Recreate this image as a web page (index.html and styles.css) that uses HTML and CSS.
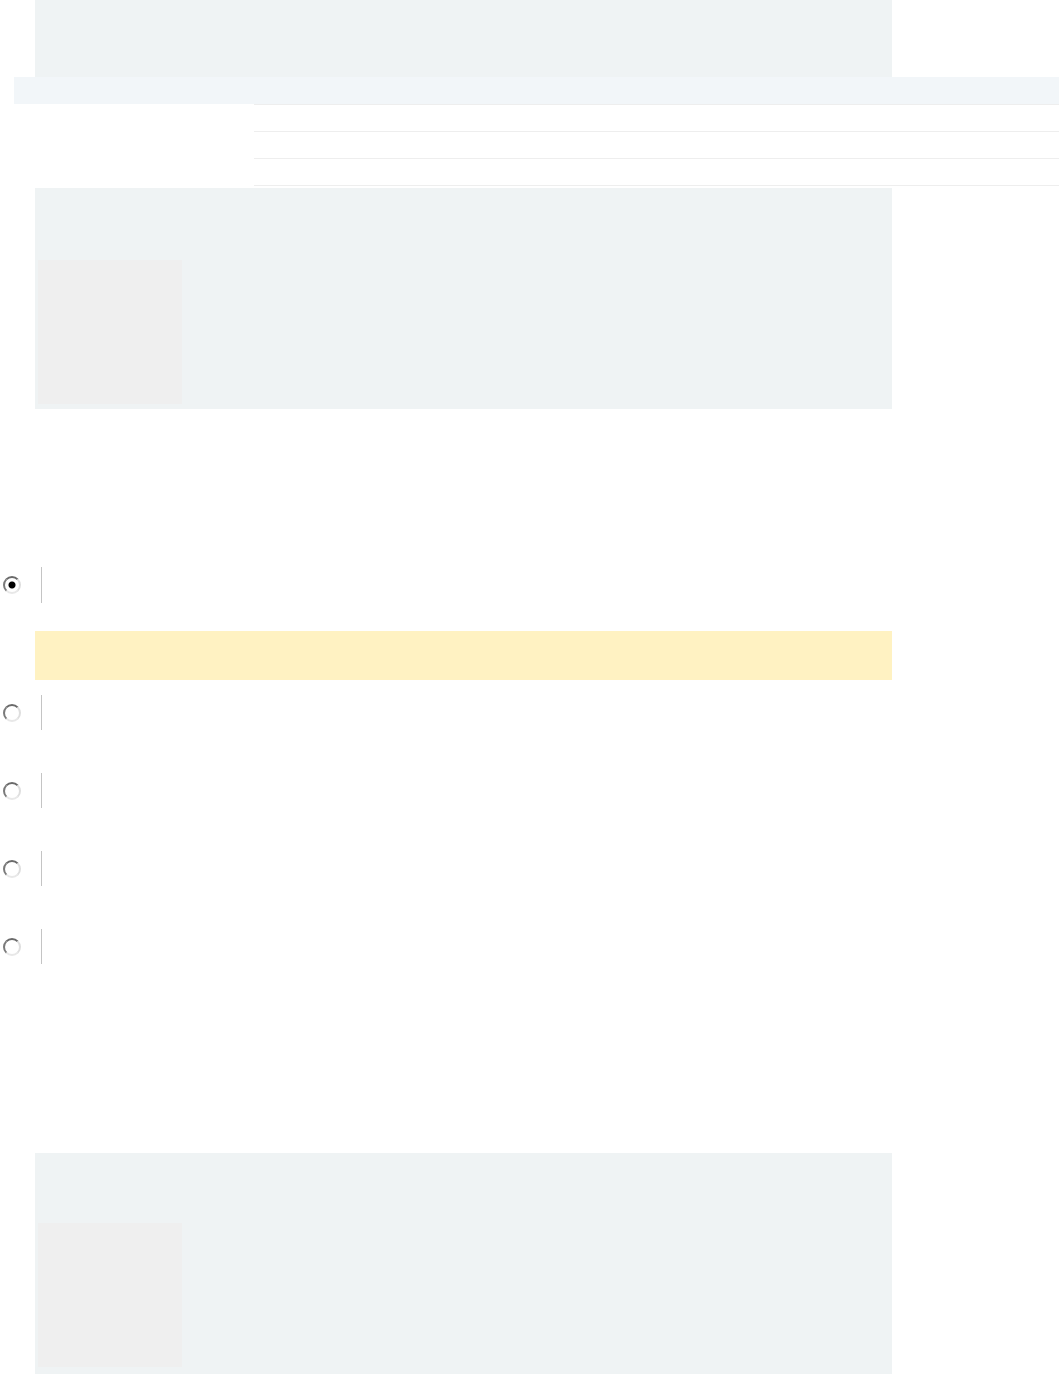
FILE: index.html
```html
<!DOCTYPE html>
<html lang="en">
<head>
<meta charset="utf-8">
<title>Page</title>
<link rel="stylesheet" href="styles.css">
</head>
<body>
<div class="page">
  <div class="hero"></div>
  <div class="band"></div>
  <div class="rows">
    <div class="row"></div>
    <div class="row"></div>
    <div class="row"></div>
  </div>
  <div class="card card-top">
    <div class="thumb"></div>
  </div>

  <form class="options">
    <label class="option">
      <input class="radio" type="radio" name="choice" checked>
      <span class="divider"></span>
    </label>
    <div class="notice"></div>
    <label class="option">
      <input class="radio" type="radio" name="choice">
      <span class="divider"></span>
    </label>
    <label class="option">
      <input class="radio" type="radio" name="choice">
      <span class="divider"></span>
    </label>
    <label class="option">
      <input class="radio" type="radio" name="choice">
      <span class="divider"></span>
    </label>
    <label class="option">
      <input class="radio" type="radio" name="choice">
      <span class="divider"></span>
    </label>
  </form>

  <div class="card card-bottom">
    <div class="thumb"></div>
  </div>
</div>
</body>
</html>
```

FILE: styles.css
```css
html, body {
  margin: 0;
  padding: 0;
  background: #ffffff;
  font-family: "Liberation Sans", Arial, sans-serif;
}

.page {
  display: flex;
  flex-direction: column;
  width: 1059px;
}

.hero {
  margin-left: 35px;
  width: 857px;
  height: 77px;
  background: #eff3f4;
}

.band {
  margin-left: 14px;
  height: 27px;
  background: #f2f6f9;
}

.rows {
  margin-left: 254px;
  border-top: 1px solid #eeeeee;
}

.row {
  height: 26px;
  border-bottom: 1px solid #eeeeee;
}

.card {
  margin-left: 35px;
  width: 857px;
  box-sizing: border-box;
  background: #eff3f4;
  padding-left: 3px;
}

.card-top {
  margin-top: 2px;
  height: 221px;
  padding-top: 72px;
}

.card-bottom {
  margin-top: 189px;
  height: 221px;
  padding-top: 70px;
}

.thumb {
  width: 144px;
  height: 144px;
  background: #efefef;
}

.options {
  display: flex;
  flex-direction: column;
  margin: 158px 0 0 0;
}

.option {
  display: flex;
  align-items: center;
  height: 35px;
  margin-bottom: 43px;
}

.option:first-child {
  height: 36px;
  margin-bottom: 28px;
}

.option:last-child {
  margin-bottom: 0;
}

.radio {
  -webkit-appearance: none;
  appearance: none;
  box-sizing: border-box;
  width: 18px;
  height: 18px;
  margin: 0 20px 0 3px;
  border-radius: 50%;
  border: 2px solid;
  border-color: #6a6a6a #dedede #e8e8e8 #7a7a7a;
  background: #ffffff;
  flex: none;
}

.radio:checked {
  background: radial-gradient(circle, #000000 0 3px, #ffffff 4px);
}

.divider {
  width: 1px;
  align-self: stretch;
  background: #c4c4c4;
}

.notice {
  margin: 0 0 15px 35px;
  width: 857px;
  height: 49px;
  background: #fff2c2;
}
```
